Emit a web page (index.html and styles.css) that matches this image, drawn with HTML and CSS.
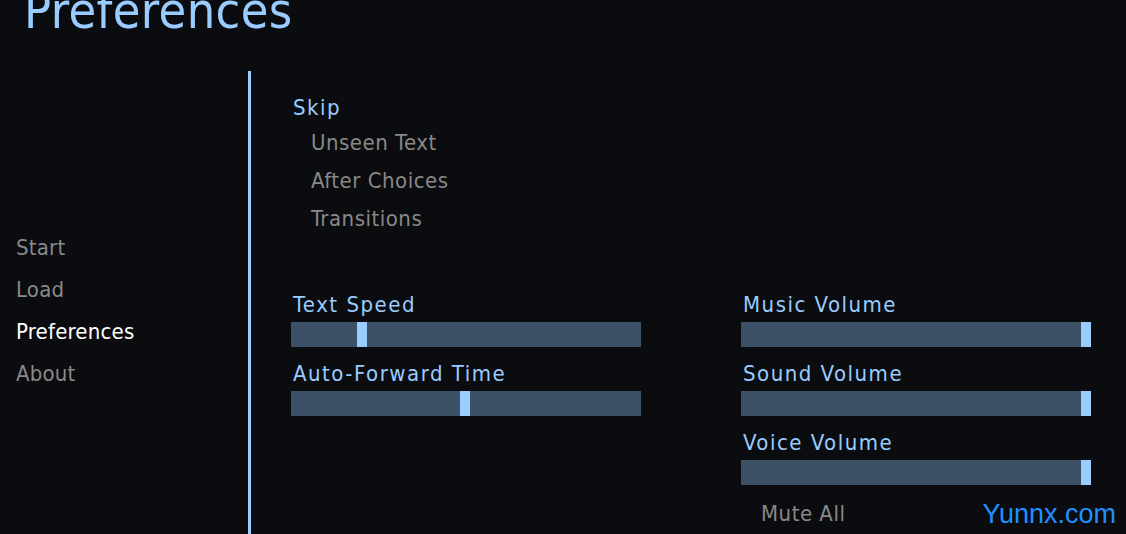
FILE: index.html
```html
<!DOCTYPE html>
<html>
<head>
<meta charset="utf-8">
<link rel="stylesheet" href="styles.css">
</head>
<body>
<div class="screen">
  <header class="title-bar"><h1 class="title">Preferences</h1></header>
  <div class="main">
    <nav class="nav">
      <a class="nav-item">Start</a>
      <a class="nav-item">Load</a>
      <a class="nav-item selected">Preferences</a>
      <a class="nav-item">About</a>
    </nav>
    <div class="divider"></div>
    <section class="content">
      <div class="group">
        <div class="label">Skip</div>
        <div class="option first">Unseen Text</div>
        <div class="option">After Choices</div>
        <div class="option">Transitions</div>
      </div>
      <div class="sliders">
        <div class="col">
          <div class="label">Text Speed</div>
          <div class="bar"><div class="thumb" style="left:66px"></div></div>
          <div class="label next">Auto-Forward Time</div>
          <div class="bar"><div class="thumb" style="left:169px"></div></div>
        </div>
        <div class="col">
          <div class="label">Music Volume</div>
          <div class="bar"><div class="thumb" style="left:340px"></div></div>
          <div class="label next">Sound Volume</div>
          <div class="bar"><div class="thumb" style="left:340px"></div></div>
          <div class="label next">Voice Volume</div>
          <div class="bar"><div class="thumb" style="left:340px"></div></div>
          <div class="option mute">Mute All</div>
        </div>
      </div>
    </section>
  </div>
  <div class="watermark">Yunnx.com</div>
</div>
</body>
</html>
```
FILE: styles.css
```css
html, body {
  margin: 0;
  padding: 0;
  background: #0b0c0f;
  overflow: hidden;
}
.screen {
  position: relative;
  width: 1126px;
  height: 534px;
  font-family: "DejaVu Sans Condensed", "DejaVu Sans", sans-serif;
  color: #888888;
}
.title-bar {
  display: flow-root;
  height: 71px;
}
.title {
  margin: 0;
  padding-left: 24px;
  font-weight: normal;
  font-size: 50px;
  line-height: 50px;
  letter-spacing: 0.4px;
  margin-top: -14px;
  color: #99ccff;
}
.main {
  display: flex;
  height: 463px;
}
.nav {
  width: 248px;
  display: flex;
  flex-direction: column;
  padding-top: 156px;
  box-sizing: border-box;
}
.nav-item {
  display: block;
  padding-left: 16px;
  font-size: 22px;
  line-height: 42px;
  height: 42px;
  letter-spacing: 0.2px;
  color: #888888;
}
.nav-item.selected {
  color: #ffffff;
}
.divider {
  width: 3px;
  background: #99ccff;
}
.content {
  padding-left: 40px;
  padding-top: 22px;
  flex: 1;
}
.label {
  font-size: 22px;
  line-height: 30px;
  height: 30px;
  letter-spacing: 1.5px;
  color: #99ccff;
  padding-left: 2px;
}
.option {
  font-size: 22px;
  line-height: 38px;
  height: 38px;
  padding-left: 20px;
  letter-spacing: 0.5px;
  color: #888888;
}
.option.first {
  margin-top: 1px;
}
.sliders {
  display: flex;
  gap: 100px;
  margin-top: 52px;
}
.col {
  width: 350px;
  display: flex;
  flex-direction: column;
}
.bar {
  position: relative;
  height: 25px;
  margin-top: 2px;
  background: #3c5066;
}
.thumb {
  position: absolute;
  top: 0;
  width: 10px;
  height: 100%;
  background: #99ccff;
}
.label.next {
  margin-top: 12px;
}
.option.mute {
  margin-top: 10px;
  line-height: 38px;
}
.watermark {
  position: absolute;
  right: 10px;
  bottom: 4px;
  font-family: "Liberation Sans", Arial, sans-serif;
  font-size: 27px;
  color: #1e90ff;
}
```
